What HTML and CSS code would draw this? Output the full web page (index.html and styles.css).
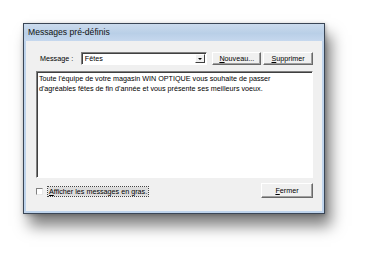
FILE: index.html
```html
<!DOCTYPE html>
<html lang="fr">
<head>
<meta charset="utf-8">
<title>Messages pré-définis</title>
<link rel="stylesheet" href="styles.css">
</head>
<body>
<div class="window">
  <div class="titlebar">Messages pré-définis</div>
  <div class="client">
    <div class="toprow">
      <span class="label">Message :</span>
      <div class="combo">
        <span class="combo-text">Fêtes</span>
        <span class="combo-btn"><span class="arrow"></span></span>
      </div>
      <button class="btn btn-nouveau"><u>N</u>ouveau...</button>
      <button class="btn btn-suppr"><u>S</u>upprimer</button>
    </div>
    <div class="textarea">Toute l'équipe de votre magasin WIN OPTIQUE vous souhaite de passer<br>d'agréables fêtes de fin d'année et vous présente ses meilleurs voeux.</div>
    <div class="bottomrow">
      <label class="check">
        <span class="box"></span>
        <span class="check-label"><u>A</u>fficher les messages en gras.</span>
      </label>
      <button class="btn btn-fermer"><u>F</u>ermer</button>
    </div>
  </div>
</div>
</body>
</html>
```
FILE: styles.css
```css
html, body {
  margin: 0;
  padding: 0;
  background: #ffffff;
}
html {
  height: 100%;
}
body {
  box-sizing: border-box;
  min-height: 100%;
  padding: 23px 0 0 23px;
  font-family: "Liberation Sans", Arial, sans-serif;
  font-size: 7.2px;
  color: #000;
}
.window {
  width: 300px;
  height: 189px;
  border: 1px solid #3a4656;
  background: #f0f0f0;
  display: flex;
  flex-direction: column;
  box-shadow: 6px 12px 14px rgba(0, 0, 0, 0.5), 1px 1px 4px rgba(0, 0, 0, 0.25);
}
.titlebar {
  height: 17px;
  line-height: 17px;
  padding-left: 4px;
  font-size: 8.6px;
  color: #111;
  background: linear-gradient(to bottom, #cbdbed 0%, #b9cfe7 55%, #c6d8ee 100%);
}
.client {
  flex: 1;
  display: flex;
  flex-direction: column;
  border: 2px solid #bfd4ec;
  border-top: none;
  padding: 11px 9px 12px 10px;
}
.toprow {
  display: flex;
  align-items: center;
  height: 13px;
}
.label {
  margin-left: 4px;
  width: 41px;
}
.combo {
  width: 125px;
  height: 11px;
  border: 1px solid #808080;
  border-color: #808080 #fff #fff #808080;
  box-shadow: inset 1px 1px 0 #404040;
  background: #fff;
  display: flex;
  align-items: center;
  justify-content: space-between;
}
.combo-text {
  padding-left: 3px;
}
.combo-btn {
  width: 10px;
  height: 9px;
  margin-right: 1px;
  background: #f0f0f0;
  border: 1px solid;
  border-color: #fff #404040 #404040 #fff;
  box-sizing: border-box;
  display: flex;
  align-items: center;
  justify-content: center;
}
.arrow {
  width: 0;
  height: 0;
  border-left: 2px solid transparent;
  border-right: 2px solid transparent;
  border-top: 2px solid #000;
}
.btn {
  font-family: "Liberation Sans", Arial, sans-serif;
  font-size: 7.2px;
  color: #000;
  background: #f0f0f0;
  border: 1px solid;
  border-color: #fff #696969 #696969 #fff;
  box-shadow: inset -1px -1px 0 #a0a0a0;
  padding: 0;
  margin: 0;
  box-sizing: border-box;
}
.btn-nouveau {
  width: 49px;
  height: 13px;
  margin-left: 5px;
}
.btn-suppr {
  width: 50px;
  height: 13px;
  margin-left: 2px;
}
.textarea {
  margin-top: 6px;
  height: 103px;
  background: #fff;
  border: 1px solid;
  border-color: #808080 #fff #fff #808080;
  box-shadow: inset 1px 1px 0 #404040;
  padding: 2px 2px 0 2px;
  line-height: 9.5px;
}
.bottomrow {
  margin-top: 5px;
  display: flex;
  align-items: center;
  justify-content: space-between;
  height: 15px;
}
.check {
  display: flex;
  align-items: center;
  margin-top: 2px;
}
.box {
  width: 5px;
  height: 5px;
  background: #fff;
  border: 1px solid;
  border-color: #808080 #e6e6e6 #e6e6e6 #808080;
}
.check-label {
  margin-left: 5px;
  padding: 0 1px;
  background: #dcdcdc;
  outline: 1px dotted #444;
  line-height: 9px;
}
.btn-fermer {
  width: 52px;
  height: 15px;
}
```
